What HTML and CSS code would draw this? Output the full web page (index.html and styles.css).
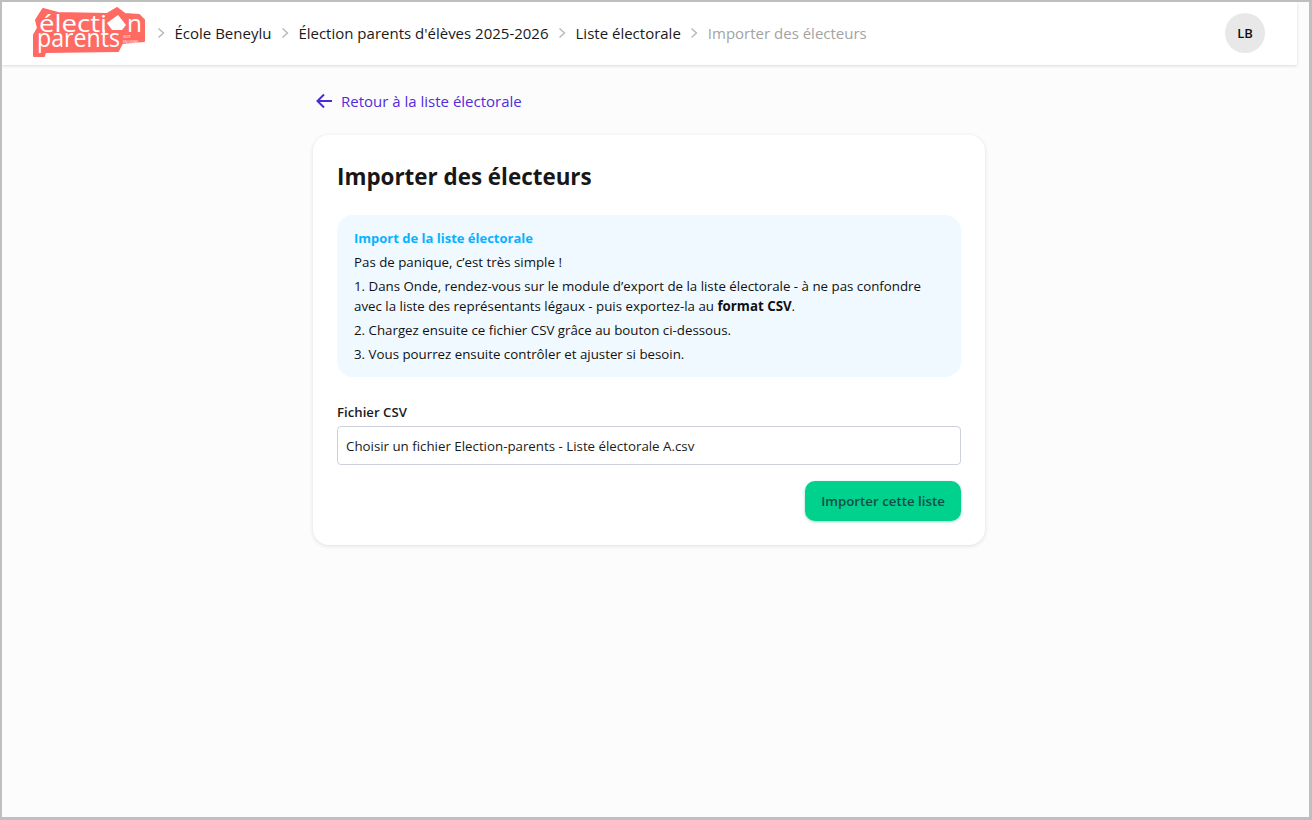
FILE: index.html
```html
<!DOCTYPE html>
<html lang="fr">
<head>
<meta charset="utf-8">
<title>Importer des électeurs</title>
<link rel="stylesheet" href="styles.css">
</head>
<body>
<div class="frame">
  <header class="topbar">
    <a class="logo">
      <svg width="113" height="50" viewBox="0 0 113 50">
        <path class="logo-bg" d="M10 2 L25 6 L74 7 L84 1 L92 7 L106 8 L111 13 L111 34 L89 36 L85 44 L12 45 L11 49 L1 49 L1 28 L5 21 L3 13 Z"/>
        <text class="logo-l1" x="6" y="25" textLength="68" lengthAdjust="spacingAndGlyphs">électi</text>
        <path class="logo-house" d="M74 16 L85 8 L93 18 L89 23 L79 23 Z"/>
        <text class="logo-l1" x="94" y="25" textLength="15" lengthAdjust="spacingAndGlyphs">n</text>
        <text class="logo-l2" x="4" y="40" textLength="83" lengthAdjust="spacingAndGlyphs">parents</text>
        <text class="logo-s" x="90" y="31">VOIT</text>
        <text class="logo-s" x="90" y="36">EN LIGNE</text>
      </svg>
    </a>
    <nav class="crumbs">
      <svg class="chev" width="8" height="12" viewBox="0 0 8 12"><path d="M1.500 1.500 L6.500 6 L1.500 10.500"/></svg>
      <a>École Beneylu</a>
      <svg class="chev" width="8" height="12" viewBox="0 0 8 12"><path d="M1.500 1.500 L6.500 6 L1.500 10.500"/></svg>
      <a>Élection parents d'élèves 2025-2026</a>
      <svg class="chev" width="8" height="12" viewBox="0 0 8 12"><path d="M1.500 1.500 L6.500 6 L1.500 10.500"/></svg>
      <a>Liste électorale</a>
      <svg class="chev" width="8" height="12" viewBox="0 0 8 12"><path d="M1.500 1.500 L6.500 6 L1.500 10.500"/></svg>
      <span class="current">Importer des électeurs</span>
    </nav>
    <div class="avatar">LB</div>
  </header>
  <main class="content">
    <a class="back">
      <svg width="17" height="16" viewBox="0 0 17 16"><path d="M16 8 H1.500 M8 1.500 L1.500 8 L8 14.500"/></svg>
      Retour à la liste électorale
    </a>
    <section class="card">
      <h1>Importer des électeurs</h1>
      <div class="info">
        <h2>Import de la liste électorale</h2>
        <p>Pas de panique, c’est très simple !</p>
        <p>1. Dans Onde, rendez-vous sur le module d’export de la liste électorale - à ne pas confondre avec la liste des représentants légaux - puis exportez-la au <b>format CSV</b>.</p>
        <p>2. Chargez ensuite ce fichier CSV grâce au bouton ci-dessous.</p>
        <p>3. Vous pourrez ensuite contrôler et ajuster si besoin.</p>
      </div>
      <label class="label">Fichier CSV</label>
      <div class="file">Choisir un fichier Election-parents - Liste électorale A.csv</div>
      <div class="actions"><button class="btn">Importer cette liste</button></div>
    </section>
  </main>
</div>
</body>
</html>
```
FILE: styles.css
```css
* { box-sizing: border-box; }
html, body { margin: 0; height: 100%; }
body {
  font-family: "Open Sans", "Noto Sans", sans-serif;
  background: #fff;
  color: #111;
}
.frame {
  height: 820px;
  border: solid #bfbfbf;
  border-width: 2px 3px 3px 2px;
  background: #fcfcfc;
  overflow: hidden;
}
.topbar {
  width: 1295px;
  height: 63px;
  background: #fff;
  display: flex;
  align-items: center;
  padding: 0 32px 1px 31px;
  box-shadow: 0 1px 3px rgba(0,0,0,.14);
}
.logo { display: block; height: 50px; margin-bottom: 2px; }
.logo svg { display: block; overflow: visible; }
.logo-bg { fill: #ff6b63; stroke: #ff6b63; stroke-width: 2; stroke-linejoin: round; }
.logo-house { fill: #fff; }
.logo-l1 { font-family: "Open Sans", sans-serif; font-size: 24px; fill: #fff; }
.logo-l2 { font-family: "Open Sans", sans-serif; font-size: 26px; fill: #fff; }
.logo-s { font-family: "Open Sans", sans-serif; font-size: 3.500px; fill: #fff; }
.crumbs {
  display: flex;
  align-items: center;
  gap: 9.500px;
  margin-left: 11px;
  font-size: 15px;
  color: #1a1a1a;
  flex: 1;
}
.chev { fill: none; stroke: #b5b5b5; stroke-width: 1.300; flex: none; }
.current { color: #a3a3a3; }
.avatar {
  width: 40px;
  height: 40px;
  border-radius: 50%;
  background: #e8e8e8;
  display: flex;
  align-items: center;
  justify-content: center;
  font-size: 13px;
  font-weight: 600;
}
.content {
  width: 672px;
  margin-left: 311px;
  padding-top: 25px;
}
.back {
  display: flex;
  align-items: center;
  gap: 8px;
  height: 22px;
  margin-left: 3px;
  font-size: 15px;
  color: #4f2ddb;
}
.back svg { fill: none; stroke: #4a2bd6; stroke-width: 2; }
.card {
  margin-top: 23px;
  background: #fff;
  border-radius: 16px;
  padding: 24px;
  height: 410px;
  box-shadow: 0 1px 4px rgba(0,0,0,.12);
}
h1 {
  margin: 0;
  font-size: 22.400px;
  line-height: 36px;
  font-weight: 700;
  color: #171717;
}
.info {
  margin-top: 20px;
  height: 162px;
  background: #f0f9ff;
  border-radius: 16px;
  padding: 13px 17px;
  font-size: 13.300px;
  line-height: 20px;
}
.info h2 {
  margin: 0 0 4px;
  font-size: 13px;
  line-height: 20px;
  font-weight: 700;
  color: #08b2ff;
}
.info p { margin: 0 0 4px; }
.label {
  display: block;
  margin-top: 24px;
  font-size: 13.200px;
  line-height: 22px;
  font-weight: 600;
  color: #1a1a1a;
}
.file {
  margin-top: 3px;
  height: 39px;
  border: 1px solid #cdd1db;
  border-radius: 4px;
  padding: 0 8px;
  font-size: 13.300px;
  line-height: 38px;
  color: #1a1a1a;
}
.actions { display: flex; justify-content: flex-end; margin-top: 16px; }
.btn {
  width: 156px;
  height: 40px;
  border: 0;
  border-radius: 10px;
  background: #00d18c;
  color: #134e4a;
  font: 600 13.300px "Open Sans", sans-serif;
  box-shadow: 0 1px 3px rgba(0,160,110,.4);
}
```
